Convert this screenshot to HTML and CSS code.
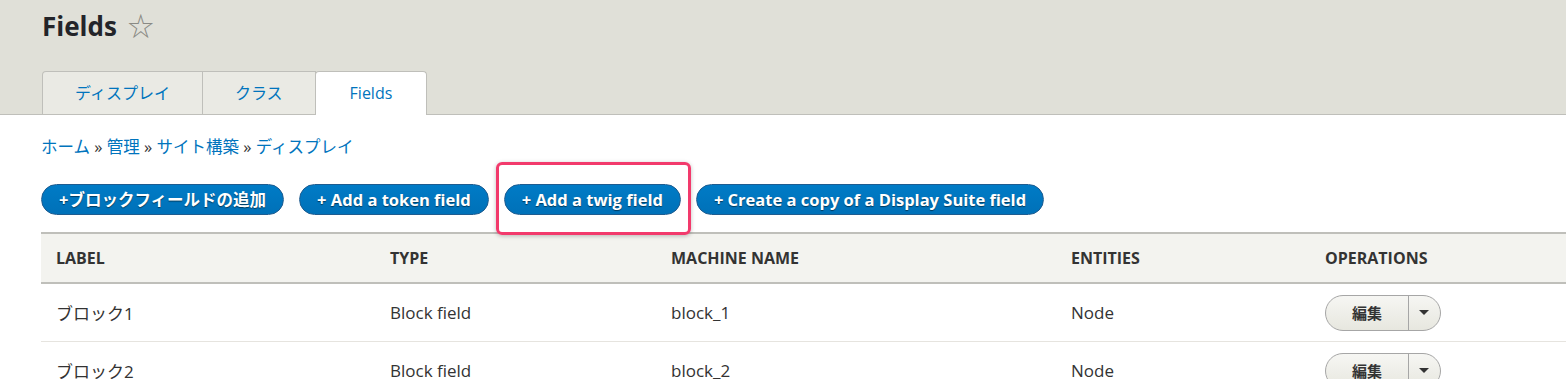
FILE: index.html
```html
<!DOCTYPE html>
<html lang="ja">
<head>
  <meta charset="UTF-8">
  <title>Fields</title>
  <link rel="stylesheet" href="styles.css">
</head>
<body>

  <div class="page-header">
    <h1 class="page-title">Fields <span class="star">&#9734;</span></h1>
    <ul class="tabs">
      <li class="tab">ディスプレイ</li>
      <li class="tab">クラス</li>
      <li class="tab active">Fields</li>
    </ul>
  </div>

  <div class="content">
    <nav class="breadcrumb">
      <a href="#">ホーム</a> » <a href="#">管理</a> » <a href="#">サイト構築</a> » <a href="#">ディスプレイ</a>
    </nav>

    <div class="actions">
      <a class="action" href="#">+ブロックフィールドの追加</a>
      <a class="action" href="#">+ Add a token field</a>
      <a class="action highlighted" href="#">+ Add a twig field</a>
      <a class="action" href="#">+ Create a copy of a Display Suite field</a>
    </div>

    <table class="fields">
      <thead>
        <tr>
          <th class="col-label">Label</th>
          <th class="col-type">Type</th>
          <th class="col-machine">Machine name</th>
          <th class="col-entities">Entities</th>
          <th>Operations</th>
        </tr>
      </thead>
      <tbody>
        <tr>
          <td>ブロック1</td>
          <td>Block field</td>
          <td>block_1</td>
          <td>Node</td>
          <td>
            <div class="dropbutton">
              <span class="dropbutton-main">編集</span>
              <span class="dropbutton-toggle"><span class="caret"></span></span>
            </div>
          </td>
        </tr>
        <tr>
          <td>ブロック2</td>
          <td>Block field</td>
          <td>block_2</td>
          <td>Node</td>
          <td>
            <div class="dropbutton">
              <span class="dropbutton-main">編集</span>
              <span class="dropbutton-toggle"><span class="caret"></span></span>
            </div>
          </td>
        </tr>
      </tbody>
    </table>
  </div>

</body>
</html>
```

FILE: styles.css
```css
body {
  margin: 0;
  font-family: "Open Sans", "Noto Sans CJK JP", sans-serif;
  color: #222330;
  background: #fff;
  overflow: hidden;
}
a {
  color: #0074bd;
  text-decoration: none;
}
.page-header {
  background: #e0e0d8;
  border-bottom: 1px solid #bfbfba;
  padding: 6px 0 0 42px;
}
.page-title {
  margin: 0;
  height: 65px;
  font-size: 26px;
  font-weight: 700;
  color: #232429;
}
.star {
  font-weight: 400;
  font-size: 26px;
  color: #8a8a84;
  margin-left: 4px;
}
.tabs {
  display: flex;
  list-style: none;
  margin: 0 0 -1px 0;
  padding: 0;
}
.tab {
  height: 42px;
  line-height: 42px;
  padding: 0 32px;
  font-size: 16px;
  color: #0074bd;
  background: #eaeae4;
  border: 1px solid #bfbfba;
  border-bottom: none;
  border-left: none;
}
.tab:first-child {
  border-left: 1px solid #bfbfba;
  border-radius: 4px 0 0 0;
}
.tab.active {
  background: #fff;
  border-left: 1px solid #bfbfba;
  margin-left: -1px;
  border-radius: 4px 4px 0 0;
  height: 43px;
  padding: 0 34px;
}
.content {
  padding-left: 41px;
}
.breadcrumb {
  margin-top: 20px;
  font-size: 16.5px;
  color: #333;
  line-height: 24px;
}
.actions {
  display: flex;
  gap: 15px;
  margin-top: 25px;
}
.action {
  position: relative;
  display: inline-block;
  height: 29px;
  line-height: 29px;
  padding: 0 17px;
  border: 1px solid #1e5c90;
  border-radius: 20em;
  background: linear-gradient(to bottom, #007bc6, #0071b8);
  color: #fff;
  font-size: 16.5px;
  font-weight: 700;
  text-shadow: 0 1px 1px rgba(0, 0, 0, 0.5);
}
.highlighted::after {
  content: "";
  position: absolute;
  left: -9px;
  right: -11px;
  top: -23px;
  bottom: -21px;
  border: 3px solid #f23a6c;
  border-radius: 6px;
  box-shadow: 0 1px 4px rgba(0, 0, 0, 0.25);
}
.fields {
  width: 100%;
  margin-top: 17px;
  border-collapse: collapse;
  font-size: 17px;
}
.fields th {
  text-align: left;
  text-transform: uppercase;
  font-weight: 700;
  font-size: 16px;
  color: #333;
  background: #f3f3ef;
  border-top: 2px solid #bfbfba;
  border-bottom: 2px solid #bfbfba;
  height: 48px;
  padding: 0 15px;
}
.fields td {
  height: 57px;
  padding: 0 15px;
  border-bottom: 1px solid #e6e4df;
  color: #333;
}
.col-label { width: 304px; }
.col-type { width: 251px; }
.col-machine { width: 370px; }
.col-entities { width: 224px; }
.dropbutton {
  display: inline-flex;
  height: 34px;
  border: 1px solid #a6a6a6;
  border-radius: 20em;
  background: linear-gradient(to bottom, #f6f6f3, #e7e7df);
  vertical-align: middle;
}
.dropbutton-main {
  width: 82px;
  line-height: 34px;
  text-align: center;
  font-size: 15px;
  font-weight: 700;
  color: #333;
  border-right: 1px solid #a6a6a6;
}
.dropbutton-toggle {
  width: 31px;
  display: flex;
  justify-content: center;
  align-items: center;
}
.caret {
  width: 0;
  height: 0;
  border-left: 5px solid transparent;
  border-right: 5px solid transparent;
  border-top: 5px solid #333;
  margin-left: -2px;
}
```
